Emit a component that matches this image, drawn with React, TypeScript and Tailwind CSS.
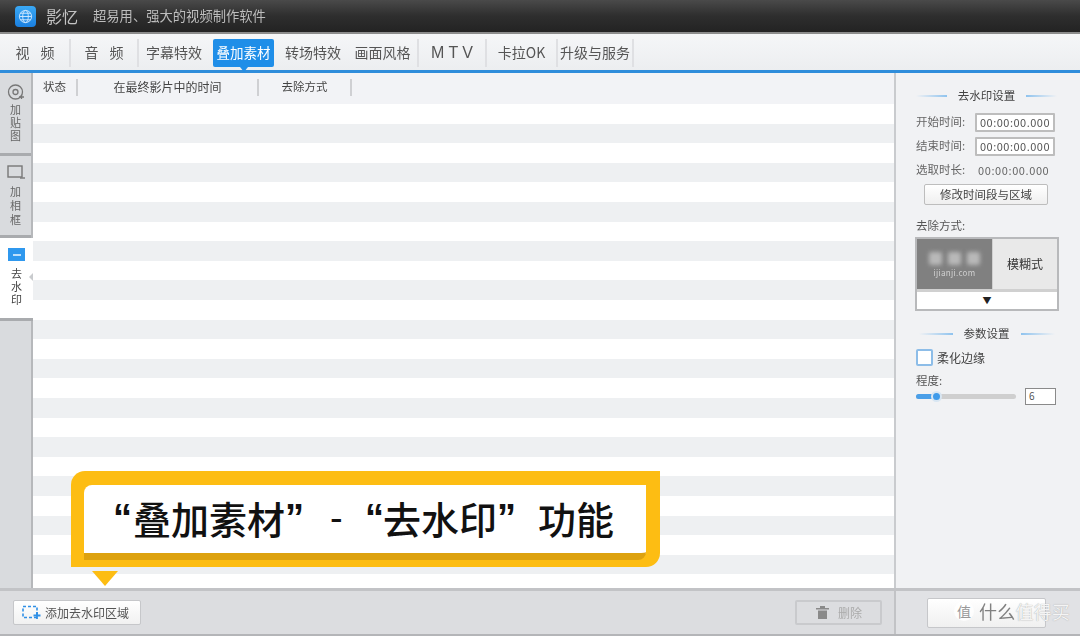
import React from "react";

const font = { fontFamily: '"Noto Sans CJK SC", "Liberation Sans", sans-serif' };

const tabs: { t: string; w: string; sep: boolean; active?: boolean; cls?: string }[] = [
  { t: "视 频", w: "w-[70px]", sep: true, cls: "pl-[4px] tracking-[4px]" },
  { t: "音 频", w: "w-[68px]", sep: true, cls: "pl-[4px] tracking-[4px]" },
  { t: "字幕特效", w: "w-[74px]", sep: false, cls: "mr-[4px]" },
  { t: "叠加素材", w: "w-[61px]", sep: false, active: true },
  { t: "转场特效", w: "w-[78px]", sep: false },
  { t: "画面风格", w: "w-[67px]", sep: true, cls: "mr-[4px]" },
  { t: "M T V", w: "w-[68px]", sep: true, cls: "font-['Liberation_Sans'] !text-[16px]" },
  { t: "卡拉OK", w: "w-[71px]", sep: true },
  { t: "升级与服务", w: "w-[76px]", sep: true },
];

function TitleLine({ text }: { text: string }) {
  return (
    <div className="flex items-center justify-center gap-[11px] h-[16px] whitespace-nowrap">
      <div className="w-[34px] h-[2px] bg-gradient-to-r from-transparent to-[#8fc3ee]" />
      <span className="text-[11.5px] text-[#444] blur-[0.4px]">{text}</span>
      <div className="w-[34px] h-[2px] bg-gradient-to-r from-[#8fc3ee] to-transparent" />
    </div>
  );
}

function TimeField({ label }: { label: string }) {
  return (
    <div className="flex items-center h-[19px]">
      <span className="w-[59px] -mt-[2px] text-[11.5px] text-[#666] blur-[0.4px] whitespace-nowrap">{label}</span>
      <div className="w-[80px] h-[19px] bg-white border-2 border-[#bdbdbd] rounded-[1px] flex items-center justify-center text-[11px] text-[#555] tracking-[0.5px] blur-[0.3px] whitespace-nowrap">
        00:00:00.000
      </div>
    </div>
  );
}

export default function App() {
  return (
    <div style={font} className="relative w-[1080px] h-[636px] overflow-hidden flex flex-col bg-white">
      {/* title bar */}
      <div className="h-[34px] shrink-0 bg-gradient-to-b from-[#4a4a4a] via-[#2e2e2e] to-[#232323] border-b-2 border-[#8c8c8c] flex items-center pl-[15px]">
        <div className="w-[21px] h-[21px] rounded-[4px] bg-gradient-to-b from-[#3aa9f5] to-[#1a7fe0] flex items-center justify-center">
          <svg width="15" height="15" viewBox="0 0 16 16" fill="none" stroke="#cfe8ff" strokeWidth="1">
            <circle cx="8" cy="8" r="6.5" />
            <ellipse cx="8" cy="8" rx="3" ry="6.5" />
            <path d="M1.5 8h13M2.5 4.5h11M2.5 11.5h11" />
          </svg>
        </div>
        <span className="ml-[10px] text-[16px] text-[#c4c4c4] blur-[0.5px]">影忆</span>
        <span className="ml-[15px] text-[13.3px] text-[#bdbdbd] blur-[0.5px] whitespace-nowrap">超易用、强大的视频制作软件</span>
      </div>

      {/* tab bar */}
      <div className="h-[39px] shrink-0 flex items-center pl-[1px] pt-[1px] bg-gradient-to-b from-[#f5f6f8] to-[#eceef0] border-b-[3px] border-[#2f8ddb]">
        {tabs.map((tab) =>
          tab.active ? (
            <div key={tab.t} className="relative w-[61px] h-[28px] bg-[#1f8ee8] rounded-[2px] flex items-center justify-center text-[13.5px] text-white blur-[0.4px] shrink-0">
              {tab.t}
              <div className="absolute left-[27px] top-[28px] w-0 h-0 border-x-[4px] border-x-transparent border-t-[5px] border-t-[#1f8ee8]" />
            </div>
          ) : (
            <div key={tab.t} className={`${tab.w} h-[28px] flex items-center justify-center shrink-0 ${tab.sep ? "border-r-2 border-[#dfe0e3]" : ""}`}>
              <span className={`text-[14px] text-[#555] whitespace-nowrap blur-[0.4px] ${tab.cls ?? ""}`}>{tab.t}</span>
            </div>
          )
        )}
      </div>

      {/* body */}
      <div className="flex-1 flex min-h-0">
        {/* left rail */}
        <div className="w-[33px] shrink-0 bg-[#d9dbde] border-r-2 border-[#b6b8bb] flex flex-col">
          <div className="h-[83px] flex flex-col items-center pt-[10px] border-b-[3px] border-[#a9abae]">
            <svg width="18" height="18" viewBox="0 0 18 18" fill="none" stroke="#777" strokeWidth="1.3">
              <circle cx="8.5" cy="9" r="7" />
              <circle cx="8.5" cy="9" r="2.5" />
              <path d="M12 14h5M14.5 12v4" />
            </svg>
            <span className="text-[11px] leading-[13px] text-[#666] mt-[2px] w-[12px] text-center blur-[0.4px]">加贴图</span>
          </div>
          <div className="h-[82px] flex flex-col items-center pt-[9px] border-b-[3px] border-[#a9abae]">
            <svg width="18" height="15" viewBox="0 0 18 15" fill="none" stroke="#777" strokeWidth="1.4">
              <rect x="1" y="1" width="14" height="11" />
              <path d="M13 13h5" />
            </svg>
            <span className="text-[11px] leading-[14px] text-[#666] mt-[4px] w-[12px] text-center blur-[0.4px]">加相框</span>
          </div>
          <div className="relative h-[83px] -mr-[2px] bg-white flex flex-col items-center pt-[10px] border-b-[3px] border-[#a9abae]">
            <div className="w-[17px] h-[13px] bg-[#2f98ee] flex items-center justify-center">
              <div className="w-[8px] h-[2px] bg-[#bfe0fb]" />
            </div>
            <span className="text-[11px] leading-[13px] text-[#444] mt-[6px] w-[12px] text-center blur-[0.3px]">去水印</span>
            <div className="absolute right-0 top-[35px] w-0 h-0 border-y-[4px] border-y-transparent border-r-[4px] border-r-[#c9cbce]" />
          </div>
        </div>

        {/* table */}
        <div className="flex-1 min-w-0 flex flex-col">
          <div className="h-[31px] shrink-0 bg-[#f2f3f6] flex items-center pb-[3px] text-[11.5px] text-[#444]">
            <div className="w-[45px] h-[17px] flex items-center justify-end pr-[10px] border-r-2 border-[#cfd0d3] whitespace-nowrap"><span className="blur-[0.4px]">状态</span></div>
            <div className="w-[181px] h-[17px] flex items-center justify-center border-r-2 border-[#cfd0d3] whitespace-nowrap"><span className="blur-[0.4px] text-[12px]">在最终影片中的时间</span></div>
            <div className="w-[93px] h-[17px] flex items-center justify-center border-r-2 border-[#cfd0d3] whitespace-nowrap"><span className="blur-[0.4px]">去除方式</span></div>
          </div>
          <div className="flex-1 bg-[repeating-linear-gradient(to_bottom,#ffffff_0,#ffffff_19.6px,#eef0f2_19.6px,#eef0f2_39.2px)]" />
        </div>

        {/* right panel */}
        <div className="w-[186px] shrink-0 bg-[#f1f2f4] border-l-2 border-[#c9cbce] pl-[20px] pr-[23px] pt-[15px] flex flex-col">
          <TitleLine text="去水印设置" />
          <div className="mt-[9px] flex flex-col gap-[5px]">
            <TimeField label="开始时间:" />
            <TimeField label="结束时间:" />
          </div>
          <div className="mt-[5px] flex items-center h-[18px] text-[11.5px] text-[#666] blur-[0.4px] whitespace-nowrap">
            <span className="w-[62px]">选取时长:</span>
            <span className="text-[11px] tracking-[0.6px]">00:00:00.000</span>
          </div>
          <div className="mt-[5px] ml-[8px] w-[124px] h-[21px] bg-gradient-to-b from-white to-[#efefef] border border-[#bdbdbd] rounded-[2px] flex items-center justify-center text-[11.5px] text-[#444] whitespace-nowrap">
            <span className="blur-[0.4px]">修改时间段与区域</span>
          </div>
          <div className="mt-[13px] h-[16px] flex items-center text-[11.5px] text-[#555]"><span className="blur-[0.4px]">去除方式:</span></div>
          <div className="mt-[3px] -ml-[1px] w-[144px] h-[74px] border-2 border-[#b8b9bb] bg-[#d0d0d0] flex flex-col">
            <div className="h-[50px] flex">
              <div className="w-[75px] bg-[#808080] flex flex-col items-center pt-[13px]">
                <div className="flex gap-[6px]">
                  <div className="w-[13px] h-[13px] bg-[#b8b8b8] rounded-[2px] blur-[2px]" />
                  <div className="w-[13px] h-[13px] bg-[#b8b8b8] rounded-[2px] blur-[2px]" />
                  <div className="w-[13px] h-[13px] bg-[#b8b8b8] rounded-[2px] blur-[2px]" />
                </div>
                <span className="mt-[3px] text-[8px] leading-[10px] text-[#d0d0d0] tracking-[0.3px] blur-[0.3px]">ijianji.com</span>
              </div>
              <div className="flex-1 ml-[1px] bg-[#e9e9e9] flex items-center justify-center text-[12px] text-[#333]">
                <span className="blur-[0.3px]">模糊式</span>
              </div>
            </div>
            <div className="mt-[3px] flex-1 bg-white flex items-center justify-center text-[9px] text-[#222]">▼</div>
          </div>
          <div className="mt-[15px]">
            <TitleLine text="参数设置" />
          </div>
          <div className="mt-[7px] flex items-center h-[17px]">
            <div className="w-[17px] h-[17px] bg-white border-2 border-[#8dbde8] rounded-[2px]" />
            <span className="ml-[4px] text-[12px] text-[#444] blur-[0.4px] whitespace-nowrap">柔化边缘</span>
          </div>
          <div className="mt-[7px] h-[16px] flex items-center text-[11.5px] text-[#555]"><span className="blur-[0.4px]">程度:</span></div>
          <div className="-mt-[2px] flex items-center h-[18px]">
            <div className="relative w-[100px] h-[5px] rounded-full bg-[#cfcfcf]">
              <div className="w-[20px] h-full rounded-l-full bg-[#4a9fe8]" />
              <div className="absolute left-[15px] -top-[3px] w-[11px] h-[11px] rounded-full bg-[#3f9bea] border-2 border-[#d8e6f2]" />
            </div>
            <div className="ml-[9px] w-[31px] h-[17px] bg-white border border-[#8a8a8a] text-[10px] text-[#555] flex items-center pl-[3px] leading-none">6</div>
          </div>
        </div>
      </div>

      {/* bottom bar */}
      <div className="h-[48px] shrink-0 flex bg-[#dcdde0] border-t-[3px] border-[#c2c3c6] border-b-2 border-b-[#b4b5b8]">
        <div className="flex-1 min-w-0 flex items-center justify-between pl-[13px] pr-[12px]">
          <div className="w-[128px] h-[25px] bg-gradient-to-b from-white to-[#f1f1f1] border border-[#c6c7ca] rounded-[2px] flex items-center pl-[8px]">
            <svg width="19" height="15" viewBox="0 0 19 15" fill="none">
              <rect x="1" y="1.5" width="14" height="11" stroke="#2f8fe6" strokeWidth="1.6" strokeDasharray="3 2" />
              <path d="M15 7v7M11.5 10.5h7" stroke="#2f8fe6" strokeWidth="1.8" />
            </svg>
            <span className="ml-[4px] text-[12px] text-[#555] blur-[0.4px] whitespace-nowrap">添加去水印区域</span>
          </div>
          <div className="w-[87px] h-[25px] bg-[#dcdde0] border-2 border-[#c9cacd] rounded-[2px] flex items-center justify-center gap-[8px]">
            <svg width="15" height="15" viewBox="0 0 15 15" fill="#8a8a8a">
              <path d="M1 3h13v1.5H1zM5 1h5v2H5zM3 5.5h9V14H3z" />
            </svg>
            <span className="text-[12px] text-[#aaa] blur-[0.6px]">删除</span>
          </div>
        </div>
        <div className="w-[186px] shrink-0 border-l-2 border-[#c2c3c6] bg-[#e1e2e5] flex items-center pl-[31px]">
          <div className="w-[119px] h-[30px] bg-gradient-to-b from-white to-[#f0f0f0] border border-[#c6c7ca] rounded-[2px]" />
        </div>
      </div>

      {/* callout */}
      <div className="absolute left-[71px] top-[471px] w-[589px] h-[96px] rounded-tl-[14px] rounded-br-[14px] bg-[#fdbd13] pt-[14px] pl-[13px] pr-[14px] pb-[7px]">
        <div className="h-[75px] bg-white rounded-tl-[8px] rounded-br-[8px] border-b-[7px] border-[#dda20f] flex items-center pl-[29px] pb-[3px] text-[38px] leading-none text-[#111] whitespace-nowrap font-medium">
          <span className="w-[20px] font-['Liberation_Sans'] font-bold">“</span>
          <span>叠加素材</span>
          <span className="w-[45px] font-['Liberation_Sans'] font-bold">”</span>
          <span className="w-[35px] font-['Liberation_Sans'] font-normal">-</span>
          <span className="w-[18px] font-['Liberation_Sans'] font-bold">“</span>
          <span>去水印</span>
          <span className="w-[41px] font-['Liberation_Sans'] font-bold">”</span>
          <span>功能</span>
        </div>
      </div>
      <div className="absolute left-[92px] top-[571px] w-0 h-0 border-x-[13px] border-x-transparent border-t-[15px] border-t-[#fdbd13]" />

      {/* watermark */}
      <div className="absolute left-[954px] top-[601px] flex items-center text-[18px] leading-none whitespace-nowrap">
        <div className="w-[20px] h-[20px] rounded-full bg-white/80 text-[#999] flex items-center justify-center text-[14px]">值</div>
        <span className="ml-[5px] tracking-[0.2px] text-[#808080] blur-[0.7px]">什么</span>
        <span className="tracking-[0.2px] text-[#f4f4f4] [text-shadow:0_0_1px_#999]">值得买</span>
      </div>
    </div>
  );
}
